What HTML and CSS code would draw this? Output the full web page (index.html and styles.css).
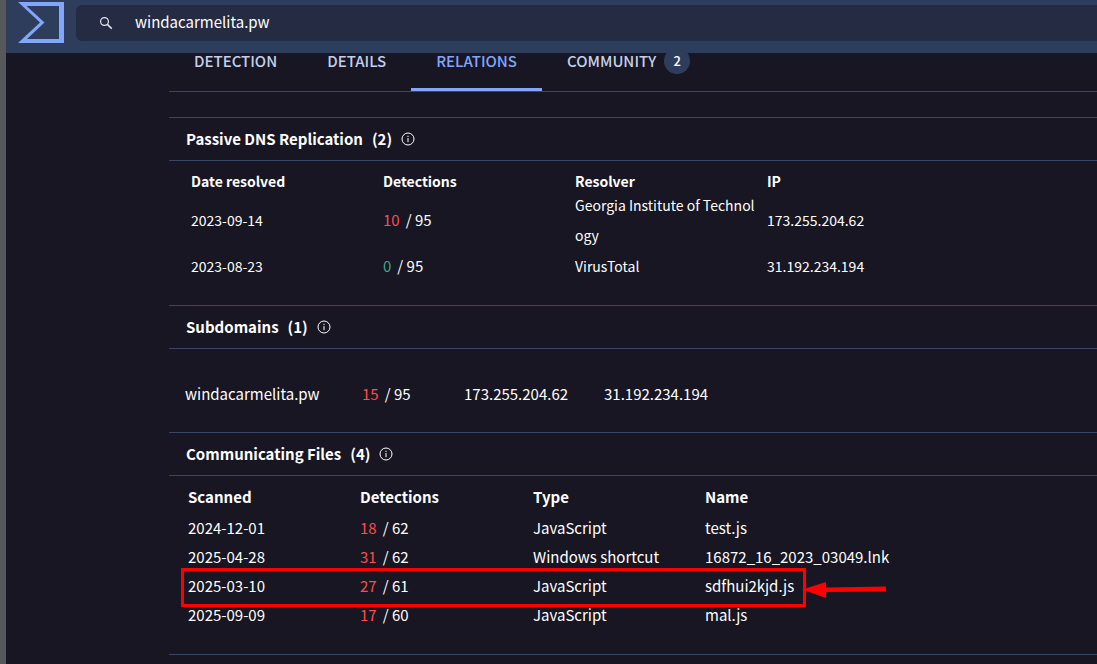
FILE: index.html
```html
<!DOCTYPE html>
<html lang="en">
<head>
<meta charset="utf-8">
<title>windacarmelita.pw</title>
<link rel="stylesheet" href="styles.css">
</head>
<body>
<svg class="defs" aria-hidden="true">
  <symbol id="info" viewBox="0 0 14 14">
    <circle cx="7" cy="7" r="6" fill="none" stroke="currentColor"/>
    <path d="M7 6v4.200M7 3.800v1.200" fill="none" stroke="currentColor"/>
  </symbol>
</svg>
<header class="topbar">
  <a class="logo" href="#" aria-label="Home">
    <svg width="46" height="41" viewBox="0 0 46 41"><path fill="#82a6fb" fill-rule="evenodd" d="M0 0H46V41H0L22 20.500ZM8.500 4L26.500 20.500L9 37H41V4Z"/></svg>
  </a>
  <label class="search">
    <svg width="14" height="14" viewBox="0 0 14 14" fill="none" stroke="#e4e9f2" stroke-width="1.200"><circle cx="5.500" cy="5.500" r="3.900"/><path d="M8.400 8.400L12.800 12.800" stroke-width="1.500"/></svg>
    <input type="text" value="windacarmelita.pw" aria-label="Search">
  </label>
</header>
<main class="report">
  <nav class="tabs">
    <a class="tab" href="#">DETECTION</a>
    <a class="tab" href="#">DETAILS</a>
    <a class="tab tab-active" href="#">RELATIONS</a>
    <a class="tab" href="#">COMMUNITY <span class="badge">2</span></a>
  </nav>

  <section class="panel">
    <h2 class="panel-title">Passive DNS Replication <span>(2)</span><svg class="info"><use href="#info"/></svg></h2>
    <table class="dns">
      <colgroup><col class="dns-col"><col class="dns-col"><col class="dns-col"><col></colgroup>
      <thead><tr><th>Date resolved</th><th>Detections</th><th>Resolver</th><th>IP</th></tr></thead>
      <tbody>
        <tr><td>2023-09-14</td><td class="score"><span class="bad">10</span>/ 95</td><td>Georgia Institute of Technology</td><td>173.255.204.62</td></tr>
        <tr><td>2023-08-23</td><td class="score"><span class="good">0</span>/ 95</td><td>VirusTotal</td><td>31.192.234.194</td></tr>
      </tbody>
    </table>
  </section>

  <section class="panel">
    <h2 class="panel-title">Subdomains <span>(1)</span><svg class="info"><use href="#info"/></svg></h2>
    <table class="subdomains">
      <colgroup><col class="sub-name"><col class="sub-score"><col class="sub-ip"><col></colgroup>
      <tbody>
        <tr><td>windacarmelita.pw</td><td><span class="bad">15</span>/ 95</td><td>173.255.204.62</td><td>31.192.234.194</td></tr>
      </tbody>
    </table>
  </section>

  <section class="panel panel-last">
    <h2 class="panel-title">Communicating Files <span>(4)</span><svg class="info"><use href="#info"/></svg></h2>
    <div class="files-wrap">
      <table class="files">
        <colgroup><col class="file-col"><col class="file-col-wide"><col class="file-col"><col></colgroup>
        <thead><tr><th>Scanned</th><th>Detections</th><th>Type</th><th>Name</th></tr></thead>
        <tbody>
          <tr><td>2024-12-01</td><td><span class="bad">18</span>/ 62</td><td>JavaScript</td><td>test.js</td></tr>
          <tr><td>2025-04-28</td><td><span class="bad">31</span>/ 62</td><td>Windows shortcut</td><td>16872_16_2023_03049.lnk</td></tr>
          <tr><td>2025-03-10</td><td><span class="bad">27</span>/ 61</td><td>JavaScript</td><td>sdfhui2kjd.js</td></tr>
          <tr><td>2025-09-09</td><td><span class="bad">17</span>/ 60</td><td>JavaScript</td><td>mal.js</td></tr>
        </tbody>
      </table>
      <div class="highlight"></div>
      <svg class="arrow" width="86" height="18" viewBox="0 0 86 18"><path fill="#fe0000" d="M0 8.500L24 1V6.500L84 5.500V10.500L24 11V17Z"/></svg>
    </div>
  </section>
</main>
</body>
</html>
```
FILE: styles.css
```css
* {
  box-sizing: border-box;
}

body {
  margin: 0;
  min-height: 100vh;
  border-left: 6px solid #57585c;
  background: #171622;
  color: #fff;
  font: 15px/24px "Noto Sans CJK SC", "Noto Sans", sans-serif;
  overflow: hidden;
}

.defs {
  position: absolute;
  width: 0;
  height: 0;
}

.topbar {
  position: relative;
  z-index: 1;
  display: flex;
  align-items: flex-start;
  gap: 12px;
  height: 53px;
  padding: 2px 0 0 12px;
  background: #2f3d5c;
}

.logo svg {
  display: block;
}

.search {
  display: flex;
  flex: 1;
  align-items: center;
  gap: 22px;
  height: 36px;
  margin-top: 3px;
  padding-left: 23px;
  border-radius: 6px 0 0 6px;
  background: #242b43;
}

.search input {
  flex: 1;
  padding: 0 0 2px;
  border: 0;
  outline: 0;
  background: none;
  color: #fff;
  font: inherit;
}

.report {
  margin-left: 163px;
}

.tabs {
  display: flex;
  height: 59px;
  margin-top: -20px;
  border-bottom: 1px solid #3b4564;
}

.tab {
  display: flex;
  align-items: center;
  gap: 8px;
  padding: 0 25px 2px;
  color: #c3d0ea;
  font-weight: 500;
  text-decoration: none;
}

.tab-active {
  color: #82a6fb;
  box-shadow: inset 0 -3px #82a6fb;
}

.badge {
  width: 26px;
  border-radius: 13px;
  background: #2f3d5c;
  color: #fff;
  font-size: 13px;
  line-height: 26px;
  text-align: center;
}

.panel {
  border-top: 1px solid #3b4564;
}

.tabs + .panel {
  margin-top: 25px;
}

.panel-last {
  border-bottom: 1px solid #3b4564;
}

.panel-title {
  display: flex;
  align-items: center;
  gap: 9px;
  height: 43px;
  margin: 0;
  padding-left: 17px;
  border-bottom: 1px solid #3b4564;
  font-size: 15px;
  font-weight: 700;
}

.info {
  width: 14px;
  height: 14px;
}

table {
  width: 100%;
  border-collapse: collapse;
  table-layout: fixed;
}

th,
td {
  padding: 0;
  text-align: left;
}

.bad,
.good {
  margin-right: 6px;
  color: #ff4c4c;
}

.good {
  color: #42a58a;
}

.dns {
  margin: 11px 0 23px 22px;
  font-size: 14px;
}

.dns-col {
  width: 192px;
}

.dns th {
  line-height: 18px;
}

.dns td {
  height: 32px;
  padding-right: 12px;
  line-height: 30px;
  word-break: break-all;
}

.dns .score {
  font-size: 15px;
}

.subdomains {
  margin-left: 16px;
}

.subdomains td {
  height: 83px;
  padding-top: 6px;
}

.sub-name {
  width: 177px;
}

.sub-score {
  width: 102px;
}

.sub-ip {
  width: 140px;
}

.files-wrap {
  position: relative;
  padding: 4px 0 25px 19px;
}

.file-col {
  width: 172px;
}

.file-col-wide {
  width: 173px;
}

.files th {
  line-height: 33px;
}

.files td {
  line-height: 29px;
}

.highlight {
  position: absolute;
  top: 92px;
  left: 12px;
  width: 625px;
  height: 39px;
  border: 3px solid #fe0000;
}

.arrow {
  position: absolute;
  top: 105px;
  left: 633px;
}
```
